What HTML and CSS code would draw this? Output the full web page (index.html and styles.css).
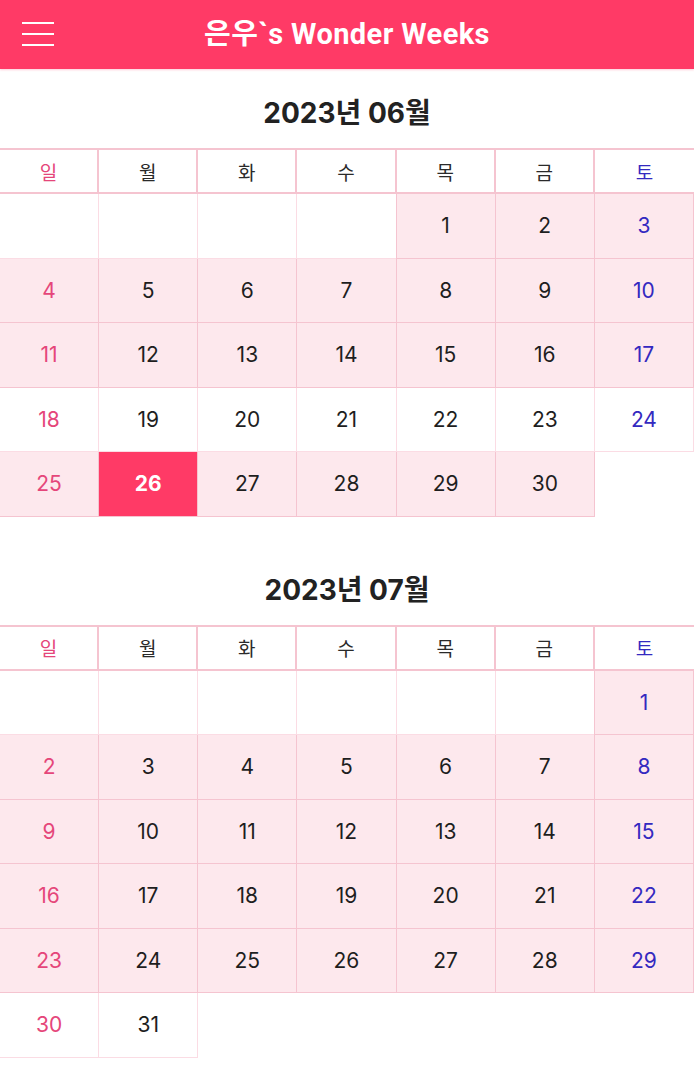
FILE: index.html
```html
<!DOCTYPE html>
<html lang="ko">
<head>
    <meta charset="UTF-8">
    <meta name="viewport" content="width=device-width, initial-scale=1.0">
    <title>은우`s Wonder Weeks</title>
    <link rel="stylesheet" href="styles.css">
</head>
<body>

    <header class="app-header">
        <button class="menu-button" aria-label="menu">
            <svg width="34" height="26" viewBox="0 0 34 26">
                <path d="M1 2h32M1 13h32M1 24h32" stroke="#fff" stroke-width="2" fill="none"/>
            </svg>
        </button>
        <h1 class="app-title">은우`s Wonder Weeks</h1>
    </header>

    <section class="month">
        <h2 class="month-title">2023년 06월</h2>
        <div class="calendar">
            <div class="day-name sun">일</div>
            <div class="day-name">월</div>
            <div class="day-name">화</div>
            <div class="day-name">수</div>
            <div class="day-name">목</div>
            <div class="day-name">금</div>
            <div class="day-name sat">토</div>

            <div class="cell"></div>
            <div class="cell"></div>
            <div class="cell"></div>
            <div class="cell"></div>
            <div class="cell leap">1</div>
            <div class="cell leap">2</div>
            <div class="cell leap sat">3</div>

            <div class="cell leap sun">4</div>
            <div class="cell leap">5</div>
            <div class="cell leap">6</div>
            <div class="cell leap">7</div>
            <div class="cell leap">8</div>
            <div class="cell leap">9</div>
            <div class="cell leap sat">10</div>

            <div class="cell leap sun">11</div>
            <div class="cell leap">12</div>
            <div class="cell leap">13</div>
            <div class="cell leap">14</div>
            <div class="cell leap">15</div>
            <div class="cell leap">16</div>
            <div class="cell leap sat">17</div>

            <div class="cell sun">18</div>
            <div class="cell">19</div>
            <div class="cell">20</div>
            <div class="cell">21</div>
            <div class="cell">22</div>
            <div class="cell">23</div>
            <div class="cell sat">24</div>

            <div class="cell leap sun">25</div>
            <div class="cell today">26</div>
            <div class="cell leap">27</div>
            <div class="cell leap">28</div>
            <div class="cell leap">29</div>
            <div class="cell leap">30</div>
            <div class="cell blank"></div>
        </div>
    </section>

    <section class="month">
        <h2 class="month-title">2023년 07월</h2>
        <div class="calendar">
            <div class="day-name sun">일</div>
            <div class="day-name">월</div>
            <div class="day-name">화</div>
            <div class="day-name">수</div>
            <div class="day-name">목</div>
            <div class="day-name">금</div>
            <div class="day-name sat">토</div>

            <div class="cell"></div>
            <div class="cell"></div>
            <div class="cell"></div>
            <div class="cell"></div>
            <div class="cell"></div>
            <div class="cell"></div>
            <div class="cell leap sat">1</div>

            <div class="cell leap sun">2</div>
            <div class="cell leap">3</div>
            <div class="cell leap">4</div>
            <div class="cell leap">5</div>
            <div class="cell leap">6</div>
            <div class="cell leap">7</div>
            <div class="cell leap sat">8</div>

            <div class="cell leap sun">9</div>
            <div class="cell leap">10</div>
            <div class="cell leap">11</div>
            <div class="cell leap">12</div>
            <div class="cell leap">13</div>
            <div class="cell leap">14</div>
            <div class="cell leap sat">15</div>

            <div class="cell leap sun">16</div>
            <div class="cell leap">17</div>
            <div class="cell leap">18</div>
            <div class="cell leap">19</div>
            <div class="cell leap">20</div>
            <div class="cell leap">21</div>
            <div class="cell leap sat">22</div>

            <div class="cell leap sun">23</div>
            <div class="cell leap">24</div>
            <div class="cell leap">25</div>
            <div class="cell leap">26</div>
            <div class="cell leap">27</div>
            <div class="cell leap">28</div>
            <div class="cell leap sat">29</div>

            <div class="cell sun">30</div>
            <div class="cell">31</div>
            <div class="cell blank"></div>
            <div class="cell blank"></div>
            <div class="cell blank"></div>
            <div class="cell blank"></div>
            <div class="cell blank"></div>
        </div>
    </section>

</body>
</html>
```

FILE: styles.css
```css
:root {
    --main-pink: #ff3a66;
    --leap-bg: #fde8ed;
    --line: #f5c4d0;
    --line-soft: #fbdce4;
    --text-dark: #1e1e1e;
    --sun: #e5467a;
    --sat: #3429c0;
}

* {
    margin: 0;
    padding: 0;
    box-sizing: border-box;
}

body {
    background: #fff;
    color: var(--text-dark);
    font-family: Inter, 'Noto Sans CJK KR', sans-serif;
}

.app-header {
    position: relative;
    height: 69px;
    padding-bottom: 7px;
    background: var(--main-pink);
    display: flex;
    align-items: center;
    justify-content: center;
    box-shadow: 0 1px 2px rgba(255, 58, 102, 0.25);
}

.menu-button {
    position: absolute;
    left: 21px;
    top: 21px;
    background: none;
    border: none;
    display: flex;
}

.app-title {
    color: #fff;
    font-family: Roboto, 'Noto Sans CJK KR', sans-serif;
    font-size: 29px;
    font-weight: 700;
    letter-spacing: 0.4px;
}

.month {
    padding-top: 26px;
}

.month + .month {
    margin-top: 29px;
}

.month-title {
    text-align: center;
    font-size: 28px;
    font-weight: 700;
    line-height: 36px;
    margin-bottom: 17px;
    color: #222;
}

.calendar {
    display: grid;
    grid-template-columns: repeat(7, 1fr);
    grid-auto-rows: 64.5px;
    grid-template-rows: 46px;
}

.day-name,
.cell {
    display: flex;
    align-items: center;
    justify-content: center;
}

.day-name {
    font-size: 19px;
    border-top: 2px solid var(--line);
    border-bottom: 2px solid var(--line);
    border-right: 2px solid var(--line);
    color: #2a2a2a;
}

.day-name:nth-child(7) {
    border-right: none;
}

.cell {
    font-size: 21px;
    border-right: 1px solid var(--line-soft);
    border-bottom: 1px solid var(--line-soft);
    border-left: 1px solid var(--line-soft);
    margin-left: -1px;
}

.cell.leap {
    background: var(--leap-bg);
    border-color: var(--line);
}

.cell.today {
    background: var(--main-pink);
    color: #fff;
    font-weight: 700;
    border-color: var(--line);
}

.cell.blank {
    border-color: transparent;
}

.sun {
    color: var(--sun);
}

.sat {
    color: var(--sat);
}
```
